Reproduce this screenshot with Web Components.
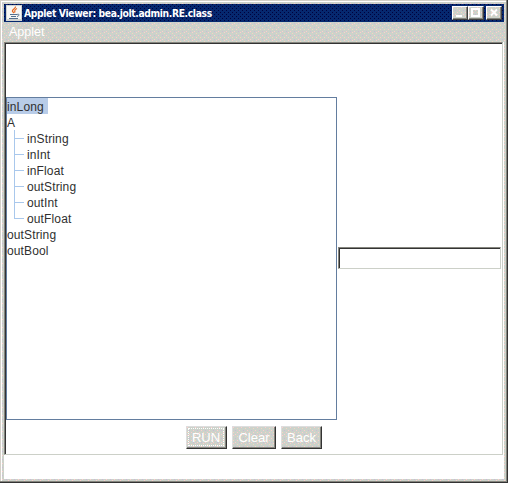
<!DOCTYPE html>
<html lang="en"><head><meta charset="utf-8"><title>Applet Viewer</title>
<style>html,body{margin:0;background:#fff;overflow:hidden}</style></head><body><applet-window></applet-window>
<script>
const def=(name,html)=>customElements.define(name,class extends HTMLElement{
 constructor(){super();this.attachShadow({mode:'open'}).innerHTML=html}});
// Vector tile of single-pixel dots over a flat colour.
const tile=(base,size,dots)=>`background:${base} url("data:image/svg+xml,${encodeURIComponent(`<svg xmlns='http://www.w3.org/2000/svg' width='${size}' height='${size}' shape-rendering='crispEdges'>${dots.map(([x,y,c])=>`<rect x='${x}' y='${y}' width='1' height='1' fill='${c}'/>`).join('')}</svg>`)}");`;
const dither=tile('#ccd2ca',8,[[0,0,'#ffcccc'],[4,1,'#f5d5c0'],[2,3,'#cbb8d8'],[6,3,'#ffcccc'],[0,5,'#f5d5c0'],[4,5,'#ffcccc'],[2,7,'#ffcccc'],[6,7,'#cbb8d8']]);
const navy=tile('#06286f',4,[[0,0,'#00003c'],[2,2,'#00003c']]);
def('java-icon',`<style>:host{display:block;width:16px;height:16px}svg{display:block}</style>
<svg width="16" height="16" viewBox="0 0 16 16"><path fill="#d0d2d0" d="M0 0h16v16H0z"/><path fill="#f7f7f5" d="M1 1h14v13H1z"/>
<path d="M9.500 1.500C10 4 5.500 4 6.500 6.500L8 8M11 3.500C8 5 8.500 6 9 7.500" fill="none" stroke="#e56a25" stroke-width="1.300"/>
<path d="M4 9.500h7M5 11.500h5M3 13.500h9M11 9.500c3-1 2.500 1.500 0 2" fill="none" stroke="#54708f"/></svg>`);
def('caption-button',`<style>:host{display:block;box-sizing:border-box;width:16px;height:14px;${dither}border:1px solid;border-color:#fff #404040 #404040 #fff;box-shadow:inset -1px -1px #85857e}svg{display:block}</style><slot></slot>`);
def('title-bar',`<style>:host{display:flex;box-sizing:border-box;height:18px;padding:1px 2px 0 2px;${navy}color:#fff;font:bold 11px/17px "DejaVu Sans Condensed","DejaVu Sans",sans-serif}
span{margin-left:2px;flex:1;white-space:nowrap}span b{display:inline-block;letter-spacing:-.4px;transform:scaleX(.934);transform-origin:0 50%}caption-button{margin-top:1px}caption-button:last-child{margin-left:2px}svg{display:block;fill:none;stroke:#fff;stroke-width:2}</style>
<java-icon></java-icon><span><b><slot></slot></b></span>
<caption-button><svg width="14" height="12"><path d="M3 9h6"/></svg></caption-button>
<caption-button><svg width="14" height="12"><path d="M3 2h7v7H3z"/></svg></caption-button>
<caption-button><svg width="14" height="12"><path d="M4 2.500l6 6m0-6l-6 6"/></svg></caption-button>`);
def('menu-bar',`<style>:host{display:block;box-sizing:border-box;height:20px;padding:2px 0 0 5px;color:#fff;font:12.500px/16px "Liberation Sans",sans-serif}</style><slot></slot>`);
def('tree-row',`<style>:host{display:flex;height:16px;line-height:18px}span{height:16px}:host([selected]) span{background:#b8cce8;padding-right:4px}
i{display:none;box-sizing:border-box;width:20px;height:16px;background:linear-gradient(#a9c8ec,#a9c8ec) 7px 0/1px 100% no-repeat,linear-gradient(#a9c8ec,#a9c8ec) 8px 8px/9px 1px no-repeat}:host([child]) i{display:block}:host([last]) i{background-size:1px 9px,9px 1px}</style><i></i><span><slot></slot></span>`);
def('tree-view',`<style>:host{display:block;box-sizing:border-box;width:331px;height:323px;border:1px solid #637d9f;background:#fff;color:#303030;font:12px "Liberation Sans",sans-serif;letter-spacing:.13px}</style><slot></slot>`);
def('text-input',`<style>:host{display:block;box-sizing:border-box;width:163px;height:22px;border:1px solid;border-color:#85857e #ccd0c8 #ccd0c8 #85857e;box-shadow:inset 1px 1px #333;background:#fff}</style>`);
def('push-button',`<style>:host{display:block;box-sizing:border-box;height:23px;${dither}border:1px solid;border-color:#ddd #333 #333 #ddd;box-shadow:inset -1px -1px #85857e;color:#fff;font:13px/22px "Liberation Sans",sans-serif;text-align:center}
div{box-sizing:border-box}:host([focused]) div{margin:1px 2px 2px 1px;border:1px dotted #fff;height:18px;line-height:18px}</style><div><slot></slot></div>`);
def('applet-window',`<style>:host{display:grid;box-sizing:border-box;width:508px;height:483px;grid-template-rows:18px 20px 413px 1fr;padding:4px;${dither}box-shadow:inset -1px -1px #333,inset -2px -2px #85857e,inset 1px 1px #d4d0c8,inset 2px 2px #fff}
main{display:grid;box-sizing:border-box;margin-right:1px;grid-template:54px 323px 1fr/331px 1fr;padding-left:1px;background:#fff;border:1px solid;border-color:#85857e #ccd0c8 #ccd0c8 #85857e;box-shadow:inset 1px 1px #333,1px 0 #fff}
tree-view{grid-area:2/1}.side{grid-area:2/2;padding:150px 0 0 1px}.actions{grid-area:3/1/4/3;display:grid;grid-template-columns:41px 44px 41px;column-gap:5px;justify-content:start;align-content:start;padding:6px 0 0 180px}footer{background:#fff}</style>
<title-bar>Applet Viewer: bea.jolt.admin.RE.class</title-bar><menu-bar>Applet</menu-bar>
<main><tree-view><tree-row selected>inLong</tree-row><tree-row>A</tree-row><tree-row child>inString</tree-row><tree-row child>inInt</tree-row><tree-row child>inFloat</tree-row><tree-row child>outString</tree-row><tree-row child>outInt</tree-row><tree-row child last>outFloat</tree-row><tree-row>outString</tree-row><tree-row>outBool</tree-row></tree-view>
<div class="side"><text-input></text-input></div>
<div class="actions"><push-button focused>RUN</push-button><push-button>Clear</push-button><push-button>Back</push-button></div></main><footer></footer>`);
</script></body></html>
